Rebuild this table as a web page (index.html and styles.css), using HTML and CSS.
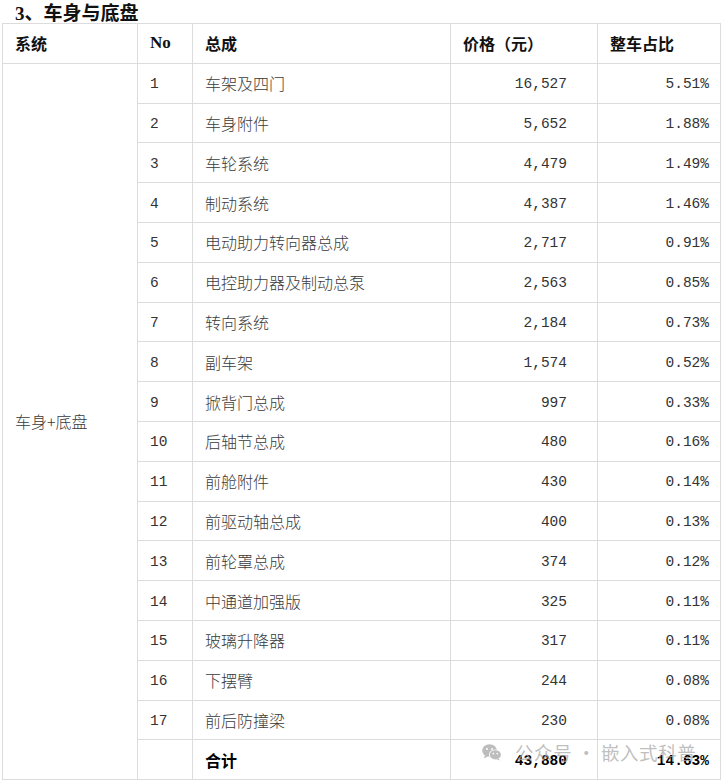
FILE: index.html
```html
<!DOCTYPE html>
<html lang="zh">
<head>
<meta charset="utf-8">
<title>车身与底盘</title>
<link rel="stylesheet" href="styles.css">
</head>
<body>
<h3 class="title"><span class="num-t">3</span>、车身与底盘</h3>
<div class="wrap">
<table class="tbl">
  <colgroup>
    <col class="c1"><col class="c2"><col class="c3"><col class="c4"><col class="c5">
  </colgroup>
  <thead>
    <tr><th>系统</th><th>No</th><th>总成</th><th>价格（元）</th><th>整车占比</th></tr>
  </thead>
  <tbody>
    <tr><td rowspan="18" class="sys">车身+底盘</td><td class="n">1</td><td>车架及四门</td><td class="r price">16,527</td><td class="r pct">5.51%</td></tr>
    <tr><td class="n">2</td><td>车身附件</td><td class="r price">5,652</td><td class="r pct">1.88%</td></tr>
    <tr><td class="n">3</td><td>车轮系统</td><td class="r price">4,479</td><td class="r pct">1.49%</td></tr>
    <tr><td class="n">4</td><td>制动系统</td><td class="r price">4,387</td><td class="r pct">1.46%</td></tr>
    <tr><td class="n">5</td><td>电动助力转向器总成</td><td class="r price">2,717</td><td class="r pct">0.91%</td></tr>
    <tr><td class="n">6</td><td>电控助力器及制动总泵</td><td class="r price">2,563</td><td class="r pct">0.85%</td></tr>
    <tr><td class="n">7</td><td>转向系统</td><td class="r price">2,184</td><td class="r pct">0.73%</td></tr>
    <tr><td class="n">8</td><td>副车架</td><td class="r price">1,574</td><td class="r pct">0.52%</td></tr>
    <tr><td class="n">9</td><td>掀背门总成</td><td class="r price">997</td><td class="r pct">0.33%</td></tr>
    <tr><td class="n">10</td><td>后轴节总成</td><td class="r price">480</td><td class="r pct">0.16%</td></tr>
    <tr><td class="n">11</td><td>前舱附件</td><td class="r price">430</td><td class="r pct">0.14%</td></tr>
    <tr><td class="n">12</td><td>前驱动轴总成</td><td class="r price">400</td><td class="r pct">0.13%</td></tr>
    <tr><td class="n">13</td><td>前轮罩总成</td><td class="r price">374</td><td class="r pct">0.12%</td></tr>
    <tr><td class="n">14</td><td>中通道加强版</td><td class="r price">325</td><td class="r pct">0.11%</td></tr>
    <tr><td class="n">15</td><td>玻璃升降器</td><td class="r price">317</td><td class="r pct">0.11%</td></tr>
    <tr><td class="n">16</td><td>下摆臂</td><td class="r price">244</td><td class="r pct">0.08%</td></tr>
    <tr><td class="n">17</td><td>前后防撞梁</td><td class="r price">230</td><td class="r pct">0.08%</td></tr>
    <tr class="total"><td class="n"></td><td>合计</td><td class="r price">43,880</td><td class="r pct">14.63%</td></tr>
  </tbody>
</table>
<div class="wm">
  <svg class="wm-icon" width="20" height="17" viewBox="0 0 20 17">
    <ellipse cx="7.5" cy="6.5" rx="7.3" ry="6.2" fill="#bdbdbd"/>
    <path d="M3 11 L2 14.5 L6 12.3 Z" fill="#bdbdbd"/>
    <circle cx="5" cy="5" r="1" fill="#fff"/>
    <circle cx="10" cy="5" r="1" fill="#fff"/>
    <ellipse cx="13.3" cy="10.8" rx="6.4" ry="5.3" fill="#fff"/>
    <ellipse cx="13.3" cy="10.8" rx="5.6" ry="4.6" fill="#bdbdbd"/>
    <path d="M16.5 14.5 L18 16.6 L14.5 15.2 Z" fill="#bdbdbd"/>
    <circle cx="11.3" cy="9.6" r="0.85" fill="#fff"/>
    <circle cx="15.3" cy="9.6" r="0.85" fill="#fff"/>
  </svg>
  <span class="wm-text">公众号 · 嵌入式科普</span>
</div>
</div>
</body>
</html>
```
FILE: styles.css
```css
html, body {
  margin: 0;
  padding: 0;
  background: #fff;
}
body {
  font-family: "Liberation Serif", "Noto Sans CJK SC", serif;
  color: #3a3a3a;
}
.title {
  margin: 0;
  padding: 0 0 0 15px;
  height: 23px;
  line-height: 23px;
  font-size: 19px;
  font-weight: bold;
  color: #111;
  font-family: "Noto Sans CJK SC", sans-serif;
}
.num-t {
  font-family: "Liberation Serif", serif;
}
.wrap {
  position: relative;
  padding-left: 2px;
}
.tbl {
  border-collapse: collapse;
  table-layout: fixed;
  width: 718px;
  font-size: 16px;
}
.c1 { width: 135px; }
.c2 { width: 55px; }
.c3 { width: 258px; }
.c4 { width: 147px; }
.c5 { width: 123px; }
.tbl th, .tbl td {
  border: 1px solid #dcdcdc;
  height: 39.8px;
  padding: 0 12px;
  box-sizing: border-box;
  vertical-align: middle;
  text-align: left;
  line-height: 20px;
}
.tbl th {
  font-family: "Noto Sans CJK SC", sans-serif;
  font-weight: bold;
  color: #111;
  font-size: 16px;
}
.tbl th:nth-child(2) {
  font-family: "Liberation Serif", serif;
  font-size: 17px;
}
.tbl td {
  font-family: "Noto Sans CJK SC", sans-serif;
  font-weight: 300;
}
.tbl td.n, .tbl td.r {
  font-family: "Liberation Mono", monospace;
  font-size: 14.5px;
  font-weight: normal;
  color: #333;
  padding-top: 2px;
}
.tbl td.r { text-align: right; }
.tbl td.price { padding-right: 30px; }
.tbl td.pct { padding-right: 11px; }
.total td {
  font-weight: bold;
  color: #000;
}
.total td.r {
  font-weight: bold;
  color: #000;
}
.wm {
  position: absolute;
  left: 482px;
  top: 716px;
  display: flex;
  align-items: center;
  gap: 13px;
  pointer-events: none;
}
.wm-text {
  font-family: "Noto Sans CJK SC", sans-serif;
  font-size: 18.5px;
  color: rgba(170,170,170,0.75);
  letter-spacing: 0.6px;
}
```
